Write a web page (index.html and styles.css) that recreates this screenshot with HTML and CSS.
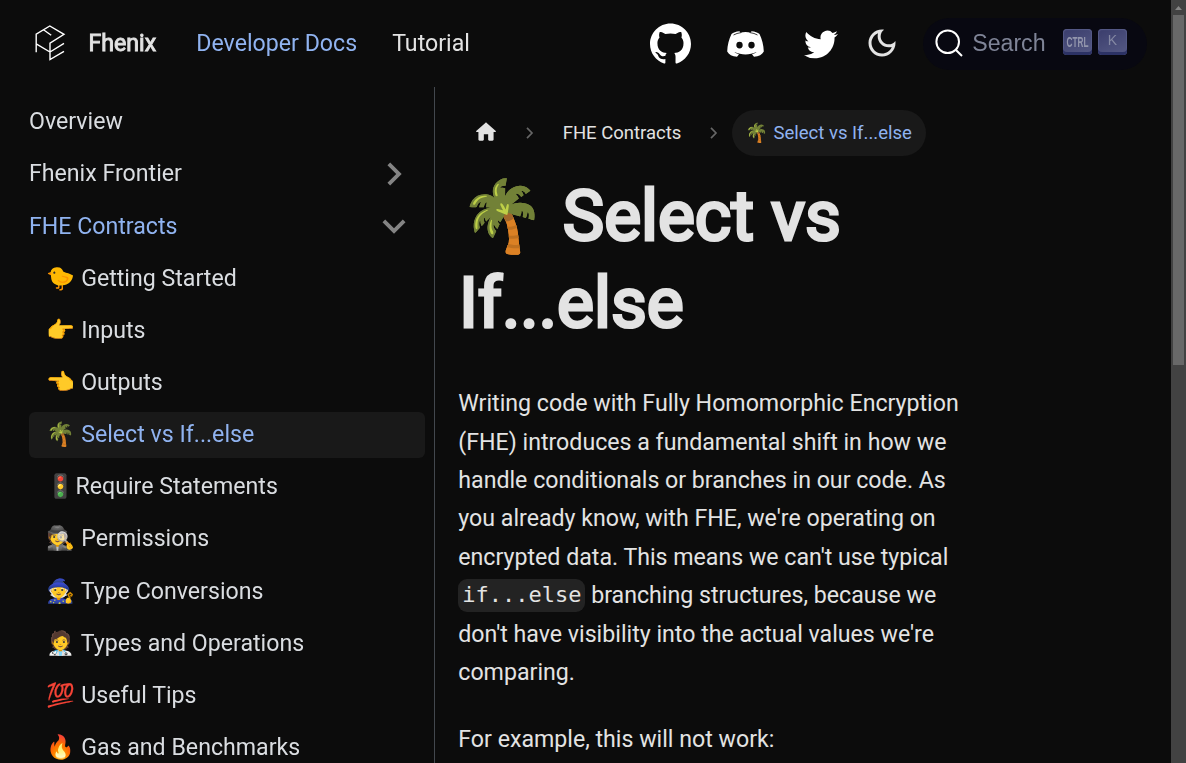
FILE: index.html
```html
<!DOCTYPE html>
<html lang="en">
<head>
<meta charset="utf-8">
<title>Select vs If...else | Fhenix</title>
<link rel="stylesheet" href="styles.css">
</head>
<body>
<div class="page">
  <div class="site">
    <header class="navbar">
      <a class="brand">
        <svg class="logo" viewBox="0 0 32 38"><path d="M2.200 28.300V10.200L15.800 2 30 10.300 16 19.200V35.500L30 27.400M2.200 19.800L16 28 30 19.400M9.500 5.800L17.200 11.200"/></svg>
        <span class="brand-name">Fhenix</span>
      </a>
      <nav class="links"><a class="link active">Developer Docs</a><a class="link">Tutorial</a></nav>
      <div class="tools">
        <svg class="github" viewBox="0 0 24 24"><path d="M12 .297c-6.63 0-12 5.373-12 12 0 5.303 3.438 9.8 8.205 11.385.6.113.82-.258.82-.577 0-.285-.01-1.04-.015-2.04-3.338.724-4.042-1.61-4.042-1.61C4.422 18.07 3.633 17.7 3.633 17.7c-1.087-.744.084-.729.084-.729 1.205.084 1.838 1.236 1.838 1.236 1.07 1.835 2.809 1.305 3.495.998.108-.776.417-1.305.76-1.605-2.665-.3-5.466-1.332-5.466-5.93 0-1.31.465-2.38 1.235-3.22-.135-.303-.54-1.523.105-3.176 0 0 1.005-.322 3.3 1.23.96-.267 1.98-.399 3-.405 1.02.006 2.04.138 3 .405 2.28-1.552 3.285-1.23 3.285-1.23.645 1.653.24 2.873.12 3.176.765.84 1.23 1.91 1.23 3.22 0 4.61-2.805 5.625-5.475 5.92.42.36.81 1.096.81 2.22 0 1.606-.015 2.896-.015 3.286 0 .315.21.69.825.57C20.565 22.092 24 17.592 24 12.297c0-6.627-5.373-12-12-12"/></svg>
        <svg class="discord" viewBox="0 0 37 28"><path fill-rule="evenodd" d="M12.500 1.200C9 1.500 6.200 2.500 4.500 4 2 9 .4 15 .2 21.500c1.500 3 5 5 9.800 5.300l2-2.600C10 23.600 8.500 22.900 7.400 22c7 3.200 15.200 3.200 22.200 0-1.100.9-2.600 1.600-4.600 2.200l2 2.600c4.800-.3 8.300-2.300 9.800-5.300-.2-6.500-1.800-12.500-4.300-17.500-1.700-1.500-4.500-2.500-8-2.800l-.8 1.300q-5.200-.8-10.400 0zM12.500 11.700a3.200 3.400 0 1 1 0 6.800 3.200 3.400 0 0 1 0-6.800zM24.500 11.700a3.200 3.400 0 1 1 0 6.800 3.200 3.400 0 0 1 0-6.800z"/><path class="crease" d="M6.500 5Q9.500 3.200 14.500 2.500M30.500 5Q27.500 3.200 22.500 2.500"/></svg>
        <svg class="twitter" viewBox="0 2 24 20"><path d="M23.953 4.57a10 10 0 01-2.825.775 4.958 4.958 0 002.163-2.723c-.951.555-2.005.959-3.127 1.184a4.92 4.92 0 00-8.384 4.482C7.69 8.095 4.067 6.13 1.64 3.162a4.822 4.822 0 00-.666 2.475c0 1.71.87 3.213 2.188 4.096a4.904 4.904 0 01-2.228-.616v.06a4.923 4.923 0 003.946 4.827 4.996 4.996 0 01-2.212.085 4.936 4.936 0 004.604 3.417 9.867 9.867 0 01-6.102 2.105c-.39 0-.779-.023-1.17-.067a13.995 13.995 0 007.557 2.209c9.053 0 13.998-7.496 13.998-13.985 0-.21 0-.42-.015-.63A9.935 9.935 0 0024 4.59z"/></svg>
        <svg class="moon" viewBox="0 0 24 24"><path d="M9.37,5.51C9.19,6.15,9.1,6.82,9.1,7.5c0,4.08,3.32,7.4,7.4,7.4c0.68,0,1.35-0.09,1.99-0.27C17.45,17.19,14.93,19,12,19c-3.86,0-7-3.14-7-7C5,9.07,6.81,6.55,9.37,5.51z M12,3c-4.97,0-9,4.03-9,9s4.03,9,9,9s9-4.03,9-9c0-0.46-0.04-0.92-0.1-1.36c-0.98,1.37-2.58,2.26-4.4,2.26c-2.98,0-5.4-2.42-5.4-5.4c0-1.81,0.89-3.42,2.26-4.4C12.92,3.04,12.46,3,12,3L12,3z"/></svg>
        <div class="search">
          <svg class="glass" viewBox="0 0 28 28"><circle cx="12.700" cy="12.700" r="11.300"/><path d="M20.700 20.700L27 27"/></svg>
          <span class="search-text">Search</span>
          <kbd class="key"><svg class="ctrl" viewBox="0 0 25 20"><text x="1.500" y="15" textLength="22" lengthAdjust="spacingAndGlyphs">CTRL</text></svg></kbd><kbd class="key">K</kbd>
        </div>
      </div>
    </header>
    <div class="body">
      <aside class="sidebar">
        <a class="item">Overview</a>
        <a class="item">Fhenix Frontier<svg class="caret" viewBox="0 0 24 24"><path d="M8.590 16.590L13.170 12 8.590 7.410 10 6l6 6-6 6z"/></svg></a>
        <a class="item current">FHE Contracts<svg class="caret" viewBox="0 0 24 24"><path d="M7.410 8.590L12 13.170l4.590-4.580L18 10l-6 6-6-6z"/></svg></a>
        <a class="item sub">🐤 Getting Started</a>
        <a class="item sub">👉 Inputs</a>
        <a class="item sub">👈 Outputs</a>
        <a class="item sub current selected">🌴 Select vs If...else</a>
        <a class="item sub">🚦Require Statements</a>
        <a class="item sub">🕵️ Permissions</a>
        <a class="item sub">🧙 Type Conversions</a>
        <a class="item sub">🧑‍⚕️ Types and Operations</a>
        <a class="item sub">💯 Useful Tips</a>
        <a class="item sub">🔥 Gas and Benchmarks</a>
      </aside>
      <main class="content">
        <nav class="crumbs">
          <a class="crumb"><svg class="home" viewBox="0 0 24 24"><path d="M10 19v-5h4v5c0 .55.45 1 1 1h3c.55 0 1-.45 1-1v-7h1.700c.46 0 .68-.57.33-.87L12.670 3.600c-.38-.34-.96-.34-1.340 0l-8.360 7.530c-.34.3-.13.87.33.87H5v7c0 .55.45 1 1 1h3c.55 0 1-.45 1-1z"/></svg></a>
          <svg class="sep" viewBox="0 0 8 12"><path d="M1 .800l5 5.200-5 5.200"/></svg>
          <a class="crumb">FHE Contracts</a>
          <svg class="sep" viewBox="0 0 8 12"><path d="M1 .800l5 5.200-5 5.200"/></svg>
          <a class="crumb here">🌴 Select vs If...else</a>
        </nav>
        <h1 class="title">🌴 Select vs If...else</h1>
        <p class="para">Writing code with Fully Homomorphic Encryption (FHE) introduces a fundamental shift in how we handle conditionals or branches in our code. As you already know, with FHE, we're operating on encrypted data. This means we can't use typical <code class="code">if...else</code> branching structures, because we don't have visibility into the actual values we're comparing.</p>
        <p class="para">For example, this will not work:</p>
      </main>
    </div>
  </div>
  <div class="scrollbar"><svg class="up" viewBox="0 0 7 4"><path d="M0 4L3.500 0 7 4z"/></svg><div class="thumb"></div></div>
</div>
</body>
</html>
```
FILE: styles.css
```css
* { box-sizing: border-box; }
body { margin: 0; background: #0c0c0c; color: #e3e3e3; font: 23.170px/38.400px Roboto, "Noto Color Emoji", sans-serif; overflow: hidden; }
.page { display: flex; width: 1186px; height: 763px; }
.site { flex: 1; display: flex; flex-direction: column; min-width: 0; }
.navbar { height: 87px; flex: none; display: flex; align-items: center; padding: 0 24px 0 33.500px; will-change: transform; }
.brand { display: flex; align-items: center; }
.logo { width: 32px; height: 38px; margin-bottom: 1px; fill: none; stroke: #fff; stroke-width: 1.4; }
.brand-name { margin-left: 23px; padding-top: 1px; -webkit-text-stroke: 0.900px #e3e3e3; }
.links { display: flex; gap: 35px; margin-left: 40px; padding-top: 1px; }
.link.active, .current { color: #90b3f0; }
.tools { display: flex; align-items: center; margin-left: auto; fill: #fff; }
.github { width: 41px; height: 41px; }
.discord { width: 37px; height: 28px; margin-left: 36px; }
.crease { fill: none; stroke: #0c0c0c; stroke-width: 0.800; }
.twitter { width: 34px; height: 29px; margin: 1px 0 0 40px; }
.moon { width: 36px; height: 36px; margin: 0 0 1px 26.400px; fill: #e3e3e3; }
.search { display: flex; align-items: center; width: 224px; height: 52px; border-radius: 26px; background: #080811; margin-left: 22.600px; padding-left: 11.500px; }
.glass { width: 28px; height: 28px; flex: none; margin-bottom: 1px; fill: none; stroke: #fff; stroke-width: 2; }
.search-text { font: 23.170px/38px "Liberation Sans", sans-serif; color: #7f8497; margin: 0 17.300px 2px 9.700px; }
.key { width: 29px; height: 26px; flex: none; margin: 0 6px 4px 0; border-radius: 4px; background: linear-gradient(155deg, #3a3d6c, #565a85); box-shadow: inset 0 -3px #2c3265, inset 0 0 1px 1px #565a87; color: #8488a3; font: 14px/23px "Liberation Sans", sans-serif; text-align: center; }
.ctrl { display: block; width: 25px; height: 20px; margin: 3px 2px 0; overflow: visible; fill: #9396ad; font: bold 15.500px "Liberation Sans", sans-serif; }
.body { flex: 1; display: flex; min-height: 0; }
.sidebar { width: 435px; flex: none; border-right: 1px solid #43484e; padding: 12.450px 9px 0 29px; color: #dadde1; display: flex; flex-direction: column; gap: 6.160px; overflow: hidden; will-change: transform; }
.item { height: 46px; flex: none; line-height: 44.500px; display: flex; justify-content: space-between; align-items: center; white-space: pre; }
.sub { padding-left: 17.600px; }
.current { color: #90b3f0; }
.selected { background: #191919; border-radius: 6px; }
.caret { width: 46px; height: 46px; margin: 0 8.400px 1px 0; fill: #848484; }
.content { width: 550px; padding: 23px 20px 0 23.300px; }
.crumbs { display: flex; align-items: center; height: 46px; font-size: 18.530px; }
.crumb { padding: 0 14px; height: 46px; line-height: 44px; display: flex; align-items: center; white-space: nowrap; }
.crumb:not(:first-child) { padding-bottom: 1px; }
.here { background: #191919; color: #90b3f0; border-radius: 23px; padding: 0 14px; }
.home { width: 26px; height: 26px; fill: #e3e3e3; margin: 0 -0.600px 3px 0.600px; }
.sep { width: 8px; height: 12px; flex: none; fill: none; stroke: #666; stroke-width: 1.700; margin: 0 14.200px; }
.title { margin: 17.300px 0 38.300px; padding-left: 0.600px; font-size: 69.600px; line-height: 86.800px; font-weight: 400; -webkit-text-stroke: 3.100px #e3e3e3; }
.para { margin: 0 0 28.500px; }
.code { font: 21.990px/1 "DejaVu Sans Mono", monospace; background: #232323; border-radius: 9px; padding: 3px 4px 5px; vertical-align: 1.500px; }
.scrollbar { width: 15px; background: #424242; display: flex; flex-direction: column; align-items: center; }
.up { width: 7px; height: 4px; margin: 6px 0 5px; fill: #868686; }
.thumb { width: 11px; height: 350px; background: #686868; }
```
